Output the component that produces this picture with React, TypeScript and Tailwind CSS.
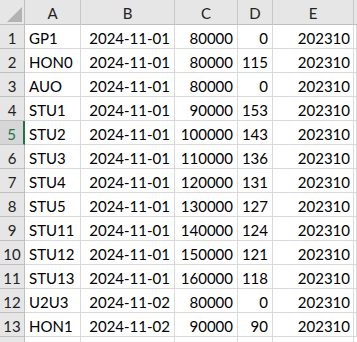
import React from "react";

const rows: [string, string, string, string, string][] = [
  ["GP1", "2024-11-01", "80000", "0", "202310"],
  ["HON0", "2024-11-01", "80000", "115", "202310"],
  ["AUO", "2024-11-01", "80000", "0", "202310"],
  ["STU1", "2024-11-01", "90000", "153", "202310"],
  ["STU2", "2024-11-01", "100000", "143", "202310"],
  ["STU3", "2024-11-01", "110000", "136", "202310"],
  ["STU4", "2024-11-01", "120000", "131", "202310"],
  ["STU5", "2024-11-01", "130000", "127", "202310"],
  ["STU11", "2024-11-01", "140000", "124", "202310"],
  ["STU12", "2024-11-01", "150000", "121", "202310"],
  ["STU13", "2024-11-01", "160000", "118", "202310"],
  ["U2U3", "2024-11-02", "80000", "0", "202310"],
  ["HON1", "2024-11-02", "90000", "90", "202310"],
];

const cols = ["A", "B", "C", "D", "E"];
const ACTIVE_ROW = 5;

const gridCols = "grid grid-cols-[25px_56px_94px_63px_35px_81px_1fr]";
const cell = "h-[24px] border-r border-b border-[#d9d9d9] bg-white flex items-center pt-[3px] overflow-hidden whitespace-nowrap";

export default function App() {
  return (
    <div className="w-[357px] h-[342px] overflow-hidden bg-white text-[15px] text-black font-['Lato','Open_Sans',sans-serif]">
      {/* column header */}
      <div className={gridCols}>
        <div className="relative h-[25px] bg-[#e6e6e6] border-r border-b border-[#bfbfbf]">
          <svg className="absolute left-[7px] top-[7px]" width="15" height="15" viewBox="0 0 15 15">
            <polygon points="15,0 15,15 0,15" fill="#b3b3b3" />
          </svg>
        </div>
        {cols.map((c) => (
          <div
            key={c}
            className="h-[25px] bg-[#e6e6e6] border-r border-b border-r-[#c8c8c8] border-b-[#bfbfbf] flex items-center justify-center pt-[2px] text-[#222]"
          >
            {c}
          </div>
        ))}
        <div className="h-[25px] bg-[#e6e6e6] border-b border-[#bfbfbf]" />
      </div>

      {rows.map((r, i) => {
        const n = i + 1;
        const active = n === ACTIVE_ROW;
        return (
          <div key={n} className={gridCols}>
            <div
              className={
                active
                  ? "h-[24px] bg-[#d6d6d6] border-b border-[#bfbfbf] border-r-2 border-r-[#217346] text-[#217346] flex items-center justify-center pt-[3px]"
                  : "h-[24px] bg-[#e6e6e6] border-r border-b border-[#bfbfbf] text-[#222] flex items-center justify-center pt-[3px]"
              }
            >
              {n}
            </div>
            <div className={`${cell} justify-start pl-[4px]`}>{r[0]}</div>
            <div className={`${cell} justify-end pr-[4px]`}>{r[1]}</div>
            <div className={`${cell} justify-end pr-[4px]`}>{r[2]}</div>
            <div className={`${cell} justify-end pr-[4px]`}>{r[3]}</div>
            <div className={`${cell} justify-end pr-[3px]`}>{r[4]}</div>
            <div className={cell} />
          </div>
        );
      })}

      {/* partially visible row 14 */}
      <div className={gridCols}>
        <div className="h-[24px] bg-[#e6e6e6] border-r border-[#bfbfbf]" />
        <div className="h-[24px] border-r border-[#d9d9d9]" />
        <div className="h-[24px] border-r border-[#d9d9d9]" />
        <div className="h-[24px] border-r border-[#d9d9d9]" />
        <div className="h-[24px] border-r border-[#d9d9d9]" />
        <div className="h-[24px] border-r border-[#d9d9d9]" />
        <div className="h-[24px]" />
      </div>
    </div>
  );
}
